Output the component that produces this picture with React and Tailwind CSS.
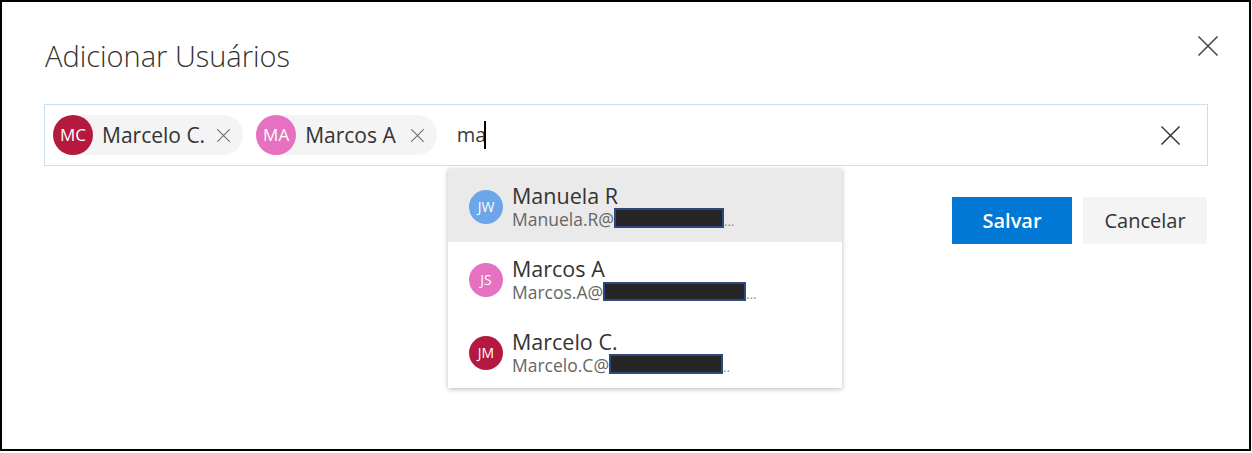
import React from "react";

function XIcon({ size, stroke, width }) {
  return (
    <svg width={size} height={size} viewBox="0 0 20 20" fill="none">
      <path d="M1 1 L19 19 M19 1 L1 19" stroke={stroke} strokeWidth={width} strokeLinecap="square" />
    </svg>
  );
}

function Chip({ initials, name, color, gap }) {
  return (
    <div className="flex items-center h-[40px] rounded-full bg-[#f4f4f4] pr-[13px]">
      <div
        className={`w-[40px] h-[40px] rounded-full flex items-center justify-center text-white text-[17px] ${color}`}
      >
        {initials}
      </div>
      <span className="ml-[9px] text-[21px] text-[#333333] leading-none">{name}</span>
      <span className={`flex items-center ${gap}`}>
        <XIcon size={13} stroke="#6b6b6b" width={1.6} />
      </span>
    </div>
  );
}

function Item({ initials, name, user, box, dots, color, active }) {
  return (
    <div className={`h-[73px] flex items-center pl-[21px] ${active ? "bg-[#eaeaea]" : "bg-white"}`}>
      <div
        className={`w-[34px] h-[34px] rounded-full flex items-center justify-center text-white text-[14px] mt-[2px] ${color}`}
      >
        {initials}
      </div>
      <div className="ml-[9px] flex flex-col pt-[4px]">
        <span className="text-[21.5px] leading-[24px] text-[#333333]">{name}</span>
        <span className="text-[17.5px] leading-[22px] text-[#666666] whitespace-nowrap">
          {user}
          <span
            className={`inline-block align-[-2px] bg-[#262626] border-2 border-[#2d4a80] ${box}`}
          ></span>
          <span className="text-[#888888] text-[13px]">{dots}</span>
        </span>
      </div>
    </div>
  );
}

export default function App() {
  return (
    <div className="w-[1252px] h-[453px] bg-white font-['Open_Sans',sans-serif]">
      <div className="w-[1251px] h-[451px] border-2 border-black flex flex-col relative">
        <div className="flex justify-between items-start pl-[43px] pr-[31px] pt-[40px]">
          <h1 className="text-[29px] leading-[28px] font-light text-[#333333]">Adicionar Usuários</h1>
          <button className="mt-[-6px]">
            <XIcon size={20} stroke="#444444" width={1.5} />
          </button>
        </div>

        <div className="mt-[34px] ml-[42px] mr-[41px] h-[62px] border border-[#c7e0f4] relative flex items-center pl-[8px] pr-[27px]">
          <div className="flex items-center gap-[13px]">
            <Chip initials="MC" name="Marcelo C." color="bg-[#b5193f]" gap="ml-[12px]" />
            <Chip initials="MA" name="Marcos A" color="bg-[#e571c0]" gap="ml-[15px]" />
          </div>
          <div className="ml-[20px] flex items-center text-[20px] text-[#3a3a3a]">
            <span>ma</span>
            <span className="w-[2px] h-[28px] bg-black ml-[-2px]"></span>
          </div>
          <div className="flex-1"></div>
          <XIcon size={19} stroke="#333333" width={1.5} />

          <div className="absolute left-[403px] top-[64px] w-[394px] bg-white shadow-[0_1px_5px_rgba(0,0,0,0.28)] z-10 flex flex-col">
            <Item initials="JW" name="Manuela R" user="Manuela.R@" box="w-[110px] h-[20px]" dots="..." color="bg-[#6aa6e8]" active />
            <Item initials="JS" name="Marcos A" user="Marcos.A@" box="w-[143px] h-[19px]" dots="..." color="bg-[#e571c0]" />
            <Item initials="JM" name="Marcelo C." user="Marcelo.C@" box="w-[114px] h-[20px]" dots=".." color="bg-[#b5193f]" />
          </div>
        </div>

        <div className="flex justify-end gap-[11px] mr-[42px] mt-[31px]">
          <button className="w-[120px] h-[47px] bg-[#0078d4] text-white text-[20px] font-semibold">Salvar</button>
          <button className="w-[124px] h-[47px] bg-[#f4f4f4] text-[#333333] text-[20px]">Cancelar</button>
        </div>
      </div>
    </div>
  );
}
